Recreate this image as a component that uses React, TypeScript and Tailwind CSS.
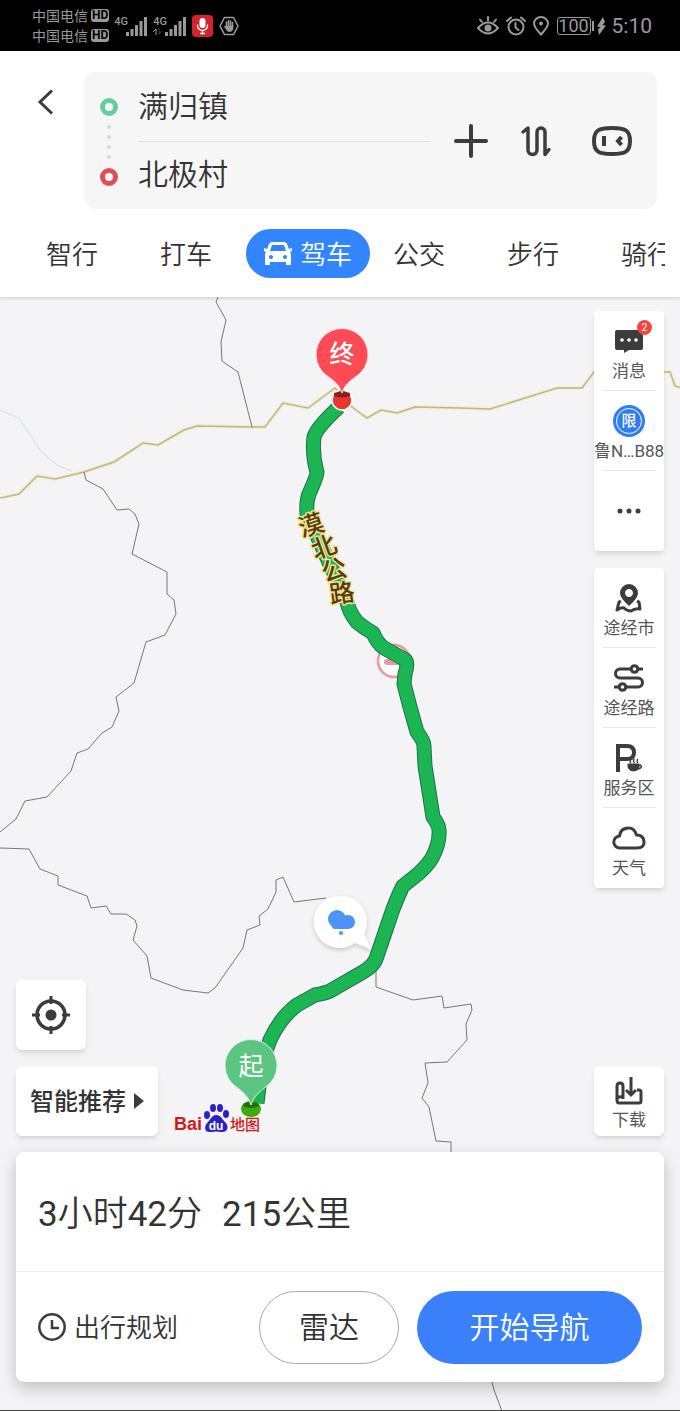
import { ReactNode } from "react";

interface SideItemProps {
    label: string;
    icon: ReactNode;
    badge?: string;
    last?: boolean;
}

const DARK = "#3c3c3c";
const STATUS = "#9a9a9a";

const BORDERS = [
    "218,297 216,302 226,320 221,342 222,361 238,372 252,427",
    "84,472 86,480 103,489 117,510 129,509 135,514 139,524 132,554 167,572 167,594 174,600 176,614 165,635 146,642 134,683 116,697 119,711 112,727 102,733 88,749 77,753 71,771 47,797 25,801 16,819 0,832",
    "0,848 29,849 40,869 58,876 58,885 87,896 91,908 106,906 111,914 126,914 135,920 137,926 133,940 147,956 151,978 183,990 208,993 215,988 243,948 247,930 260,925 259,916 268,909 276,892 276,880 283,877 294,902 326,898",
    "376,970 376,987 413,1000 442,996 444,1008 471,1004 472,1010 466,1024 467,1040 447,1062 425,1063 428,1083 422,1098 429,1107 436,1141 451,1142 451,1160",
    "491,1378 494,1390 502,1411",
];

const PROVINCE =
    "0,498 19,494 37,476 55,479 84,472 114,462 143,443 158,445 184,430 197,426 252,427 265,427 283,403 308,408 335,388 352,407 367,418 381,410 397,413 415,407 460,408 490,409 557,388 582,388 594,372 670,372 675,386 682,388";

const ROUTE =
    "M339 407 Q317 427 314 437 Q312 455 317 472 Q317 476 309 494 Q306 502 307 514 L347 602 Q349 612 357 622 Q364 628 373 633 Q377 643 384 648 L404 659 Q409 662 405 674 L404 684 L410 707 L417 732 Q424 741 424 746 L425 766 L433 817 Q439 825 439 830 Q440 843 432 858 Q427 866 418 874 L403 886 Q401 889 393 909 L377 956 Q375 965 363 972 L330 991 Q326 993 315 995 L297 1005 Q280 1018 270 1040 L262 1062 L257 1103";

const ROAD_LABEL = [
    { char: "漠", x: 311, y: 525, angle: -18 },
    { char: "北", x: 324, y: 547, angle: -20 },
    { char: "公", x: 334, y: 570, angle: -16 },
    { char: "路", x: 342, y: 593, angle: -8 },
];

function RouteMap() {
    return (
        <svg
            className="absolute inset-0 w-full h-full"
            viewBox="0 297 680 1114"
            preserveAspectRatio="xMidYMin slice"
            fontFamily="'Noto Sans CJK SC', sans-serif"
        >
            <polyline points="0,410 19,418 40,450 58,466 72,471" fill="none" stroke="#cfdcec" strokeWidth="1" />
            <polyline points={PROVINCE} fill="none" stroke="#f1efcf" strokeWidth="4" strokeLinejoin="round" />
            <polyline points={PROVINCE} fill="none" stroke="#bdb68e" strokeWidth="1.5" />
            {BORDERS.map((points) => (
                <polyline key={points} points={points} fill="none" stroke="#77777a" strokeWidth="1" />
            ))}

            {/* restriction sign half hidden by the road */}
            <circle cx="394" cy="661" r="16" fill="#fff" stroke="#e89aa0" strokeWidth="2.5" />
            <rect x="384" y="659" width="18" height="6" rx="3" fill="#e89aa0" />

            {/* weather bubble */}
            <g style={{ filter: "drop-shadow(0 2px 2px rgba(0,0,0,0.18))" }}>
                <path d="M341 896 A26 26 0 1 0 355 943 L372 950 L364 934 A26 26 0 0 0 341 896 Z" fill="#fff" />
            </g>
            <g fill="#4c95f7">
                <circle cx="337" cy="919" r="9" />
                <circle cx="348" cy="922" r="7" />
                <rect x="332" y="920" width="18" height="9" rx="3" />
                <circle cx="341" cy="933" r="2" />
            </g>

            <path d={ROUTE} fill="none" stroke="#20704a" strokeWidth="15" strokeLinejoin="round" />
            <path d={ROUTE} fill="none" stroke="#1bb653" strokeWidth="13" strokeLinejoin="round" />

            {ROAD_LABEL.map(({ char, x, y, angle }) => (
                <text
                    key={char}
                    transform={`rotate(${angle} ${x} ${y})`}
                    x={x}
                    y={y + 9}
                    fontSize="25"
                    fontWeight="500"
                    textAnchor="middle"
                    fill="#593a10"
                    stroke="#f0e592"
                    strokeWidth="3"
                    strokeLinejoin="round"
                    paintOrder="stroke"
                >
                    {char}
                </text>
            ))}

            {/* destination */}
            <circle cx="342" cy="400" r="10" fill="#e8372f" stroke="#fff" strokeWidth="1.5" />
            <path d="M334 393 Q342 390 350 393 L350 396 Q342 399 334 396 Z" fill="#8d1f1b" />
            <path
                d="M342 393 C339 384 334 381 326 375 A26 26 0 1 1 358 375 C350 381 345 384 342 393 Z"
                fill="#fc4b54"
                stroke="#fbdcdc"
                strokeWidth="1"
            />
            <text x="342" y="363" fontSize="25" fontWeight="500" textAnchor="middle" fill="#fff">
                终
            </text>

            {/* origin */}
            <ellipse cx="251" cy="1109" rx="10" ry="8" fill="#3cab0c" />
            <ellipse cx="251" cy="1105" rx="8" ry="3" fill="#226d08" />
            <path
                d="M251 1105 C248 1096 243 1092 235 1086 A26 26 0 1 1 267 1086 C259 1092 254 1096 251 1105 Z"
                fill="#5cc581"
                stroke="#d9f0e0"
                strokeWidth="1"
            />
            <text x="251" y="1075" fontSize="25" textAnchor="middle" fill="#fff">
                起
            </text>

            {/* map provider */}
            <g fontWeight="700">
                <text x="174" y="1130" fontSize="18" fontFamily="'Liberation Sans', sans-serif" fill="#d8151b">
                    Bai
                </text>
                <g fill="#2a20c4">
                    <ellipse cx="207" cy="1115" rx="3" ry="4" />
                    <ellipse cx="213" cy="1108" rx="3" ry="4" />
                    <ellipse cx="220" cy="1108" rx="3" ry="4" />
                    <ellipse cx="226" cy="1114" rx="3" ry="4" />
                    <path d="M216 1115 C221 1115 222 1119 225 1122 C230 1127 227 1133 221 1132 Q216 1131 211 1132 C205 1133 203 1127 208 1122 C211 1119 212 1115 216 1115 Z" />
                </g>
                <text x="216" y="1130" fontSize="12" textAnchor="middle" fontFamily="'Liberation Sans', sans-serif" fill="#fff">
                    du
                </text>
                <text x="230" y="1130" fontSize="15" fontWeight="500" fill="#d8151b">
                    地图
                </text>
            </g>
        </svg>
    );
}

function Signal() {
    return (
        <svg width="21" height="20" viewBox="0 0 21 20" fill={STATUS}>
            <rect x="0" y="16" width="3" height="4" />
            <rect x="4.5" y="13" width="3" height="7" />
            <rect x="9" y="9" width="3" height="11" />
            <rect x="13.5" y="5" width="3" height="15" />
            <rect x="18" y="1" width="3" height="19" />
        </svg>
    );
}

function Carrier() {
    return (
        <div className="flex items-center gap-[3px] h-5 text-sm leading-5">
            <span>中国电信</span>
            <span className="bg-[#9a9a9a] text-black text-xs leading-[13px] font-bold rounded-[3px] px-px">HD</span>
        </div>
    );
}

function StatusBar() {
    return (
        <div className="bg-black text-[#9a9a9a] h-[51px] pl-8 pr-7 flex items-center justify-between">
            <div className="flex items-center">
                <div>
                    <Carrier />
                    <Carrier />
                </div>
                <div className="flex ml-[5px]">
                    <span className="w-3 text-[11px] leading-3 font-medium">4G</span>
                    <Signal />
                </div>
                <div className="flex ml-[6px]">
                    <span className="w-3 flex flex-col text-[11px] leading-3 font-medium">
                        4G
                        <svg width="9" height="7" viewBox="0 0 9 7" stroke={STATUS} fill="none">
                            <path d="M3 7V1L0 4" />
                            <path d="M6 0v6l3-3" opacity="0.4" />
                        </svg>
                    </span>
                    <Signal />
                </div>
                <svg className="ml-[6px]" width="21" height="22" viewBox="0 0 21 22">
                    <rect width="21" height="22" rx="4" fill="#d4242b" />
                    <rect x="7.5" y="3" width="6" height="10" rx="3" fill="#fff" />
                    <path d="M5.5 9.5v1a5 5 0 0 0 10 0v-1M10.5 16v2.5M8 18.5h5" stroke="#fff" strokeWidth="1.3" fill="none" />
                </svg>
                <svg className="ml-[6px]" width="20" height="20" viewBox="0 0 20 20" fill="none" stroke={STATUS} strokeWidth="1.6">
                    <path d="M5.5 1.5h9L19 10l-4.5 8.5h-9L1 10Z" strokeLinejoin="round" />
                    <path d="M7.5 11V6M9.5 10V4.5M11.5 10V5M13.5 11V6.5" strokeLinecap="round" />
                    <path d="M6.7 10h7.6v2.5q-.5 3-3.5 3.5-2.5 0-3.5-2l-2.5-4Z" fill={STATUS} stroke="none" />
                </svg>
            </div>
            <div className="flex items-center">
                <svg width="22" height="20" viewBox="0 0 22 20" fill="none" stroke={STATUS} strokeWidth="2" strokeLinecap="round">
                    <path d="M1 12Q11 1 21 12Q11 23 1 12Z" />
                    <circle cx="11" cy="12" r="3.5" fill={STATUS} stroke="none" />
                    <path d="M11 4.5V1M5 6 3 3.5M17 6l2-2.5" />
                </svg>
                <svg className="ml-[7px]" width="20" height="20" viewBox="0 0 20 20" fill="none" stroke={STATUS} strokeWidth="2" strokeLinecap="round">
                    <circle cx="10" cy="11" r="7.5" />
                    <path d="M9.5 7v4.5l3 2.5M1 5l4-3.5M19 5l-4-3.5" />
                </svg>
                <svg className="ml-[7px]" width="16" height="20" viewBox="0 0 16 20" fill="none" stroke={STATUS} strokeWidth="2">
                    <path d="M8 18.5Q1 11 1 7.5a7 6.5 0 0 1 14 0Q15 11 8 18.5Z" />
                    <circle cx="8" cy="7.5" r="2" fill={STATUS} stroke="none" />
                </svg>
                <span className="ml-2 border border-[#9a9a9a] rounded-[3px] w-[34px] text-center text-lg leading-4">100</span>
                <span className="w-[2px] h-[10px] bg-[#9a9a9a] ml-px" />
                <svg className="ml-[3px]" width="9" height="18" viewBox="0 0 9 18" fill={STATUS}>
                    <path d="M6 0 0 9.5l3.5.5L1 12.500 2 18l7-9.500L5.500 8 8 5Z" />
                </svg>
                <span className="ml-[6px] text-[21px] leading-6">5:10</span>
            </div>
        </div>
    );
}

function SearchBox() {
    return (
        <div className="flex items-start pr-[23px]">
            <button aria-label="返回" className="w-[84px] h-[60px] pl-[37px] flex items-center">
                <svg width="17" height="26" viewBox="0 0 17 26" fill="none" stroke={DARK} strokeWidth="3">
                    <path d="M15 1.5 3 13l12 11.5" />
                </svg>
            </button>
            <div className="flex-1 min-w-0 h-[137px] bg-[#f6f6f6] rounded-xl flex items-center pr-[25px]">
                <div className="w-[50px] pt-[2px] flex flex-col items-center shrink-0">
                    <span className="w-[18px] h-[18px] rounded-full border-[5px] border-[#66cf98] bg-white" />
                    <span className="my-[9px] flex flex-col gap-[6px]">
                        <span className="w-1 h-1 rounded-full bg-[#d6d6d6]" />
                        <span className="w-1 h-1 rounded-full bg-[#d6d6d6]" />
                        <span className="w-1 h-1 rounded-full bg-[#d6d6d6]" />
                        <span className="w-1 h-1 rounded-full bg-[#d6d6d6]" />
                    </span>
                    <span className="w-[18px] h-[18px] rounded-full border-[5px] border-[#e04f54] bg-white" />
                </div>
                <div className="flex-1 min-w-0 ml-1">
                    <input
                        aria-label="起点"
                        defaultValue="满归镇"
                        className="block w-full h-[68px] pb-[6px] bg-transparent text-[30px] font-[350] outline-none"
                    />
                    <input
                        aria-label="终点"
                        defaultValue="北极村"
                        className="block w-full h-[68px] pb-[6px] bg-transparent text-[30px] font-[350] outline-none border-t border-[#e2e2e2]"
                    />
                </div>
                <button aria-label="添加途经点" className="ml-[23px] shrink-0">
                    <svg width="34" height="34" viewBox="0 0 34 34" stroke={DARK} strokeWidth="4" strokeLinecap="round">
                        <path d="M17 2v30M2 17h30" />
                    </svg>
                </button>
                <button aria-label="交换起终点" className="ml-8 shrink-0">
                    <svg width="32" height="32" viewBox="0 0 32 32" fill="none" stroke={DARK} strokeWidth="3.5" strokeLinecap="round" strokeLinejoin="round">
                        <path d="M3 7 8 3V25a4.5 4.5 0 0 0 9 0V7a4 4 0 0 1 8 0v22.5l4-5" />
                    </svg>
                </button>
                <button aria-label="语音助手" className="ml-10 shrink-0">
                    <svg width="40" height="30" viewBox="0 0 40 30" fill="none" stroke={DARK} strokeWidth="4">
                        <path d="M20 2C33 2 38 4 38 15S33 28 20 28 2 26 2 15 7 2 20 2Z" />
                        <path d="M12 10v10" />
                        <path d="M29.5 11 26 15l3.5 4" />
                    </svg>
                </button>
            </div>
        </div>
    );
}

function ModeTabs() {
    const tab = "shrink-0 px-[31px] h-[49px] pt-1";
    return (
        <nav className="mt-5 mr-[15px] pl-[15px] flex overflow-hidden text-[26px] font-[350] whitespace-nowrap">
            <button className={tab}>智行</button>
            <button className={tab}>打车</button>
            <button className="shrink-0 ml-[3px] -mr-2 w-[124px] h-[49px] rounded-full bg-[#3385ff] text-white flex items-center justify-center gap-2">
                <svg width="28" height="24" viewBox="0 0 28 24" fill="#fff">
                    <path
                        fillRule="evenodd"
                        d="M8 0h12q2 0 3 2l2 5 3-1v3l-2 1q1 1 1 3v10h-5v-3H6v3H1V13q0-2 1-3L0 9V6l3 1 2-5q1-2 3-2Zm0 3L6 9h16l-2-6ZM7 13a2 2 0 1 0 .01 0Zm14 0a2 2 0 1 0 .01 0Z"
                    />
                </svg>
                <span className="pt-1">驾车</span>
            </button>
            <button className={tab}>公交</button>
            <button className={tab}>步行</button>
            <button className={tab}>骑行</button>
        </nav>
    );
}

function SideItem({ label, icon, badge, last }: SideItemProps) {
    return (
        <button className="relative h-20 w-full flex flex-col items-center pt-[14px]">
            <span className="h-8 flex items-center">{icon}</span>
            <span className="mt-[2px] text-[17px] leading-6 text-[#555] whitespace-nowrap">{label}</span>
            {badge && (
                <span className="absolute top-[9px] left-[43px] w-[15px] h-[15px] rounded-full bg-[#f2453d] text-white text-[10px] leading-[15px]">
                    {badge}
                </span>
            )}
            {!last && <span className="absolute bottom-0 inset-x-2 border-b border-[#e8e8e8]" />}
        </button>
    );
}

function SidePanels() {
    return (
        <div className="w-[70px] flex flex-col">
            <div className="bg-white rounded shadow-md">
                <SideItem
                    label="消息"
                    badge="2"
                    icon={
                        <svg width="28" height="24" viewBox="0 0 28 24">
                            <path d="M2 1h24q2 0 2 2v16q0 2-2 2H14l-5 3v-3H2q-2 0-2-2V3q0-2 2-2Z" fill={DARK} />
                            <g fill="#fff">
                                <circle cx="7" cy="11" r="1.8" />
                                <circle cx="14" cy="11" r="1.8" />
                                <circle cx="21" cy="11" r="1.8" />
                            </g>
                        </svg>
                    }
                />
                <SideItem
                    label="鲁N…B88"
                    icon={
                        <span className="w-8 h-8 rounded-full bg-[#2f7df0] p-[3px] flex">
                            <span className="flex-1 rounded-full border border-white text-white text-[15px] leading-6 font-medium">限</span>
                        </span>
                    }
                />
                <button aria-label="更多" className="h-20 w-full flex items-center justify-center">
                    <svg width="24" height="6" viewBox="0 0 24 6" fill={DARK}>
                        <circle cx="3" cy="3" r="2.5" />
                        <circle cx="12" cy="3" r="2.5" />
                        <circle cx="21" cy="3" r="2.5" />
                    </svg>
                </button>
            </div>

            <div className="mt-[17px] bg-white rounded shadow-md">
                <SideItem
                    label="途经市"
                    icon={
                        <svg width="28" height="30" viewBox="0 0 28 30" fill="none" stroke={DARK} strokeWidth="3">
                            <path fillRule="evenodd" fill={DARK} stroke="none" d="M14 1a9 9 0 0 1 9 9q0 5-9 13Q5 15 5 10a9 9 0 0 1 9-9Zm0 5a4 4 0 1 0 .01 0Z" />
                            <path d="M6 18 4 19 2 27q4-3 7-2 3 3 7 3 4-3 9-2l-1-7-2-1" strokeLinejoin="round" />
                        </svg>
                    }
                />
                <SideItem
                    label="途经路"
                    icon={
                        <svg width="30" height="28" viewBox="0 0 30 28" fill="none" stroke={DARK} strokeWidth="3">
                            <path d="M17 5H6a4.5 4.5 0 0 0 0 9h18a4.5 4.5 0 0 1 0 9H12M24 5h5M0 23h5" />
                            <circle cx="20.5" cy="5" r="3.3" />
                            <circle cx="8.5" cy="23" r="3.3" />
                        </svg>
                    }
                />
                <SideItem
                    label="服务区"
                    icon={
                        <svg width="28" height="30" viewBox="0 0 28 30" fill="none" stroke={DARK}>
                            <path d="M3 29V3h9q7 0 7 6.5T12 16H3" strokeWidth="4" />
                            <path d="M13 21h11v3q-1 4-5.5 4T13 24Z" fill={DARK} />
                            <path d="M24 22h1.5q1.5 1.5 0 3L23 26" strokeWidth="1.5" />
                            <path d="M16 20q-2-2 0-4M19.5 20q-2-2 0-4M23 20q-2-2 0-4" strokeWidth="1.2" />
                        </svg>
                    }
                />
                <SideItem
                    label="天气"
                    last
                    icon={
                        <svg width="34" height="24" viewBox="0 0 34 24" fill="none" stroke={DARK} strokeWidth="3">
                            <path d="M8 22a6 6 0 0 1-.5-12q1-8 9-8 6 0 8 7 7 0 7.5 6.5T25 22Z" strokeLinejoin="round" />
                        </svg>
                    }
                />
            </div>

            <button className="mt-auto h-[70px] bg-white rounded-md shadow-md flex flex-col items-center pt-[11px]">
                <svg width="28" height="28" viewBox="0 0 28 28" fill="none" stroke={DARK} strokeWidth="3">
                    <path d="M8 22V9q0-3-3-3T2 9v14q0 3 2 3h20q2 0 2-2V15q0-2-2-2h-2" />
                    <path d="M2 22q1-3 6-2M16 0v18M11 13l5 5 5-5" />
                </svg>
                <span className="mt-[3px] text-[17px] leading-6 text-[#555]">下载</span>
            </button>
        </div>
    );
}

function SummaryCard() {
    return (
        <div className="mt-4 bg-white rounded-lg shadow-[0_6px_16px_rgba(0,0,0,0.22)]">
            <div className="h-[120px] flex items-center gap-5 pl-[22px] pt-[7px] text-[35px] font-[350] border-b border-[#ececec]">
                <span>
                    <span className="font-normal">3</span>小时<span className="font-normal">42</span>分
                </span>
                <span>
                    <span className="font-normal">215</span>公里
                </span>
            </div>
            <div className="h-[110px] flex items-center pl-[22px] pr-[22px]">
                <button className="flex items-center gap-2 text-[26px] font-[350]">
                    <svg width="28" height="28" viewBox="0 0 28 28" fill="none" stroke={DARK} strokeWidth="2.5">
                        <circle cx="14" cy="14" r="12.7" />
                        <path d="M14 7v8h7" />
                    </svg>
                    <span className="pt-[3px]">出行规划</span>
                </button>
                <button className="ml-auto w-[140px] h-[73px] rounded-full border border-[#a8a8a8] text-[30px] font-[350]">雷达</button>
                <button className="ml-[18px] w-[225px] h-[73px] rounded-full bg-[#3a80fb] text-white text-[30px] font-[350]">
                    开始导航
                </button>
            </div>
        </div>
    );
}

export default function App() {
    return (
        <div className="min-h-screen flex flex-col font-['Roboto','Noto_Sans_CJK_SC',sans-serif] text-[#333] bg-[#f4f4f6]">
            <StatusBar />
            <header className="relative z-10 bg-white pt-[21px] pb-[19px] shadow-[0_1px_4px_rgba(0,0,0,0.18)]">
                <SearchBox />
                <ModeTabs />
            </header>
            <main className="relative flex-1 overflow-hidden border-b border-[#444]">
                <RouteMap />
                <div className="relative px-4 pt-[14px] pb-7">
                    <div className="flex justify-between min-h-[825px]">
                        <div className="flex flex-col justify-end items-start gap-4">
                            <button aria-label="定位" className="w-[70px] h-[70px] bg-white rounded-md shadow-md flex items-center justify-center">
                                <svg width="38" height="38" viewBox="0 0 38 38" fill="none" stroke={DARK} strokeWidth="3.5">
                                    <circle cx="19" cy="19" r="14" />
                                    <circle cx="19" cy="19" r="5.5" fill={DARK} stroke="none" />
                                    <path d="M19 0v8M19 30v8M0 19h8M30 19h8" strokeWidth="3" />
                                </svg>
                            </button>
                            <button className="w-[142px] h-[70px] bg-white rounded-md shadow-md flex items-center justify-center gap-2 text-2xl font-medium">
                                <span className="pt-[2px]">智能推荐</span>
                                <svg width="10" height="16" viewBox="0 0 10 16" fill={DARK}>
                                    <path d="M0 0 10 8 0 16Z" />
                                </svg>
                            </button>
                        </div>
                        <SidePanels />
                    </div>
                    <SummaryCard />
                </div>
            </main>
        </div>
    );
}
